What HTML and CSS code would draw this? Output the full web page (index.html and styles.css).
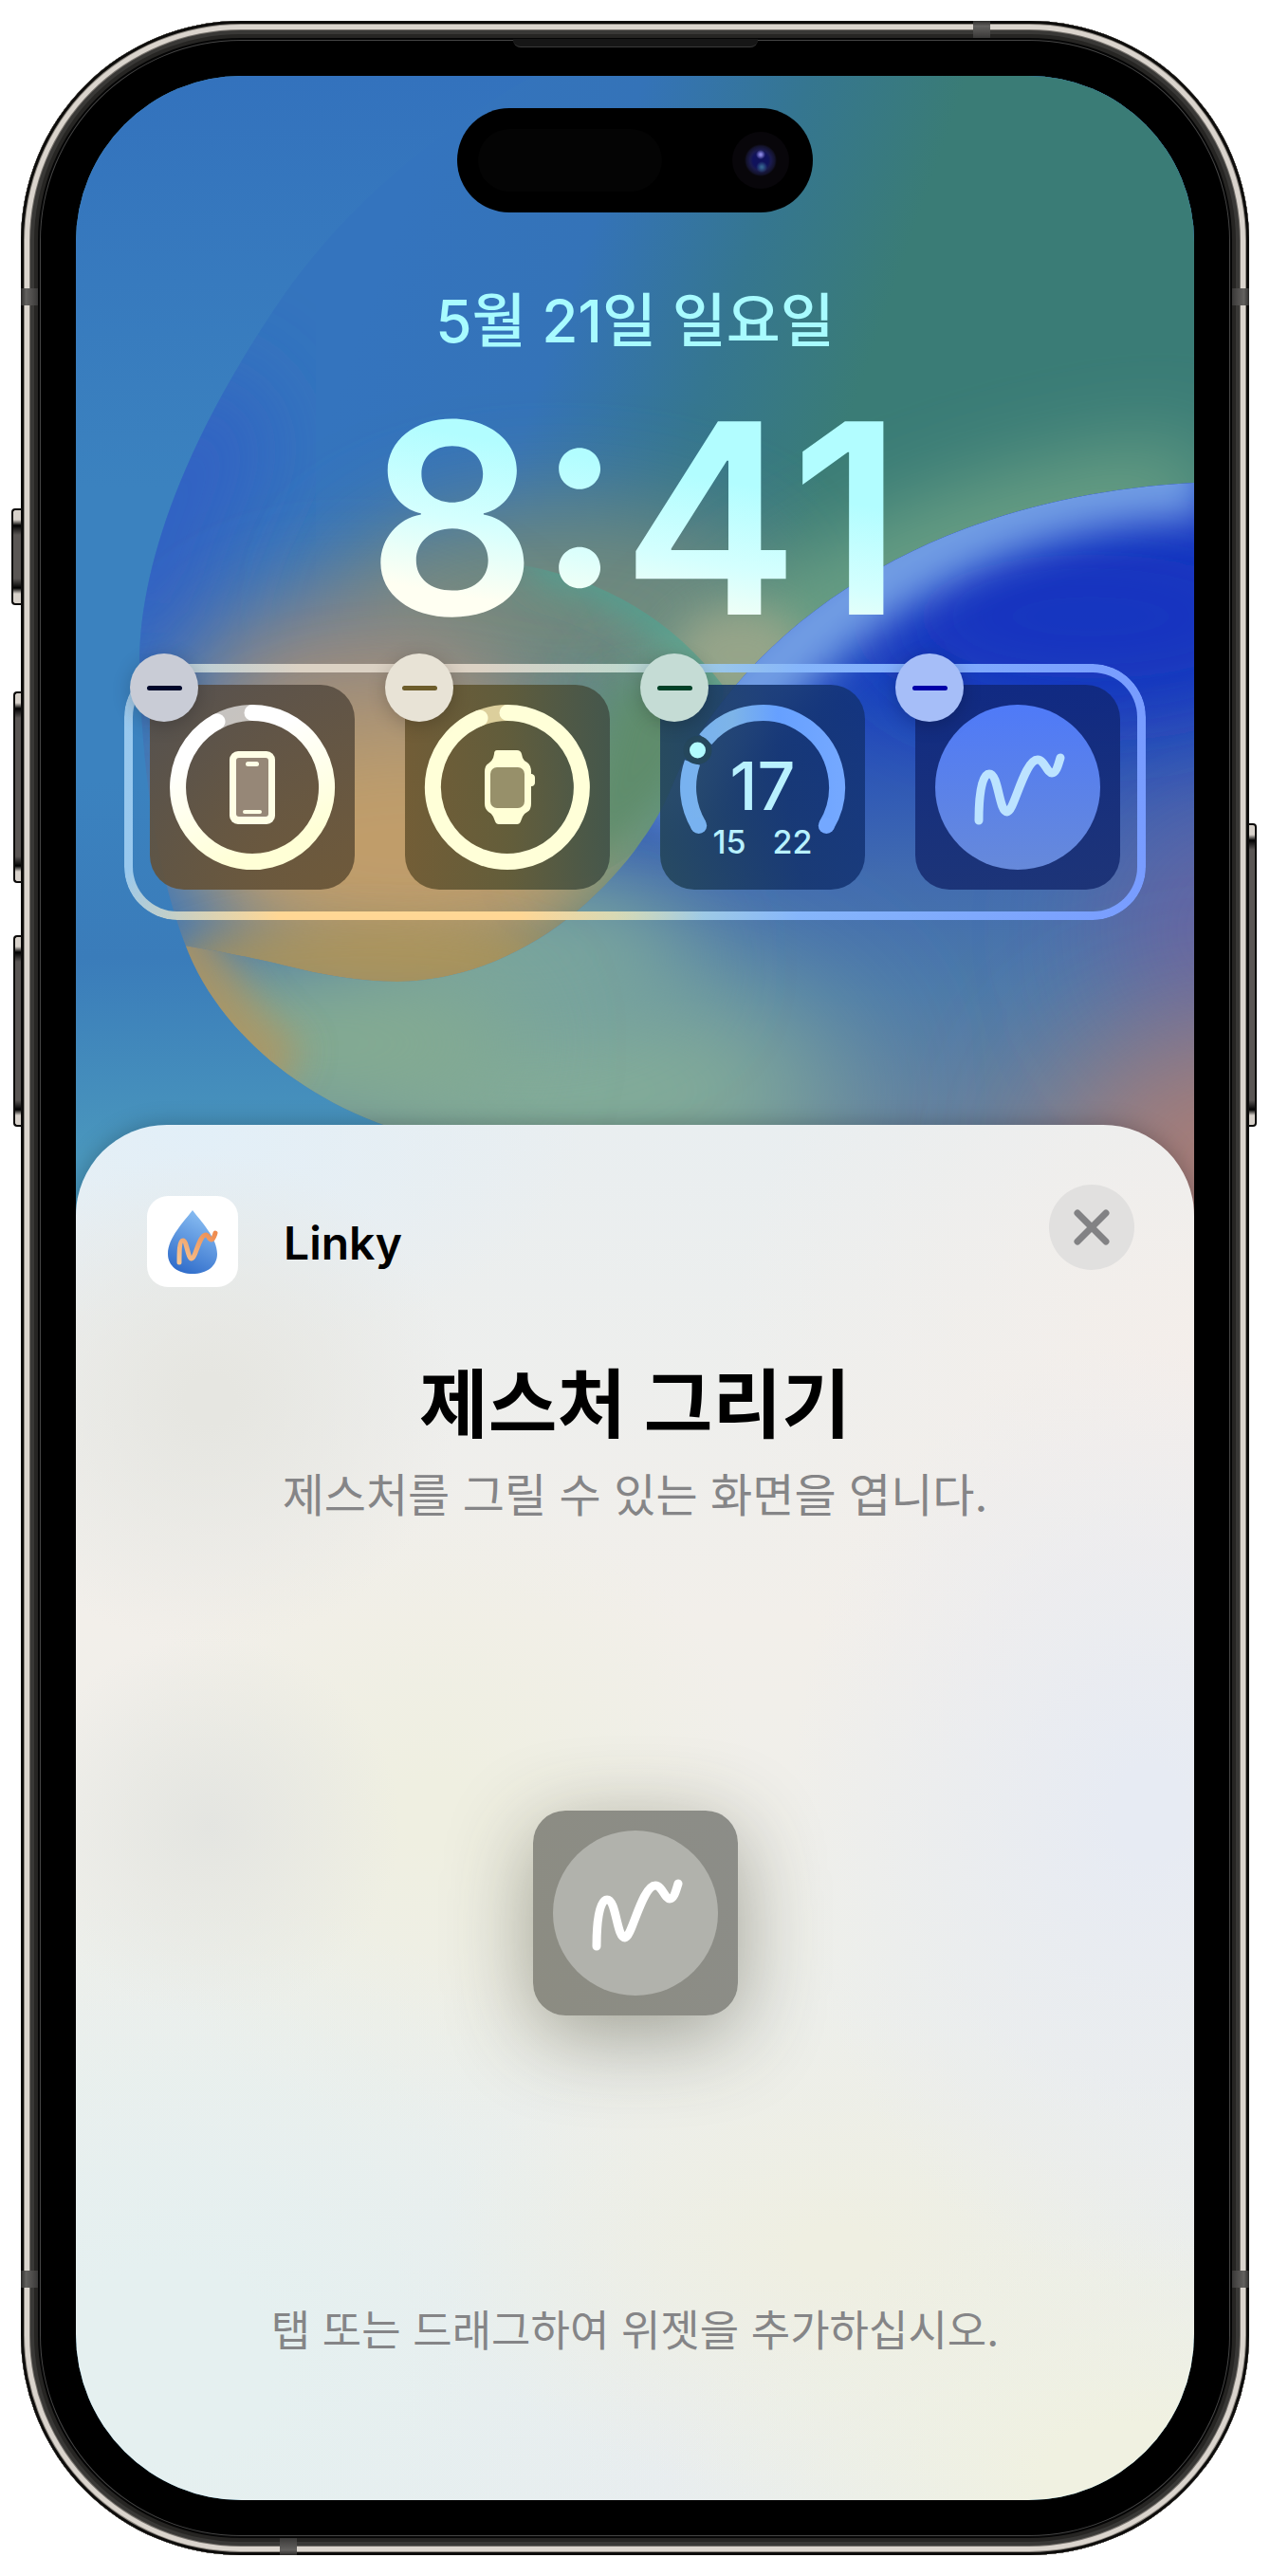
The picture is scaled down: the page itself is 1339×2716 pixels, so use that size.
FILE: index.html
```html
<!DOCTYPE html>
<html lang="ko">
<head>
<meta charset="utf-8">
<meta name="viewport" content="width=device-width, initial-scale=1">
<title>Linky</title>
<link rel="stylesheet" href="styles.css">
</head>
<body>
<div class="phone">
  <span class="key key-action"></span>
  <span class="key key-up"></span>
  <span class="key key-down"></span>
  <span class="key key-power"></span>
  <div class="frame">
    <span class="band band-left-top"></span>
    <span class="band band-right-top"></span>
    <span class="band band-left-bottom"></span>
    <span class="band band-right-bottom"></span>
    <span class="band band-top"></span>
    <span class="band band-bottom"></span>
    <span class="speaker"></span>
    <div class="screen">
      <svg class="wallpaper" viewBox="80 80 1179 1240" preserveAspectRatio="xMidYMin slice" aria-hidden="true">
        <defs>
          <linearGradient id="sky" x1="0" y1="80" x2="0" y2="1320" gradientUnits="userSpaceOnUse">
            <stop offset="0" stop-color="#3372bd"/><stop offset=".35" stop-color="#3b82bf"/><stop offset=".6" stop-color="#3b82bf"/>
            <stop offset=".75" stop-color="#3a7cba"/><stop offset=".92" stop-color="#4a97bd"/><stop offset="1" stop-color="#4a97bd"/>
          </linearGradient>
          <linearGradient id="disc" x1="430" y1="200" x2="920" y2="370" gradientUnits="userSpaceOnUse">
            <stop offset="0" stop-color="#3474be"/><stop offset=".38" stop-color="#3473b8"/><stop offset=".7" stop-color="#357690"/><stop offset="1" stop-color="#3a7c76"/>
          </linearGradient>
          <linearGradient id="orb" x1="860" y1="620" x2="880" y2="1250" gradientUnits="userSpaceOnUse">
            <stop offset="0" stop-color="#1737bf"/><stop offset=".2" stop-color="#2049bb"/><stop offset=".48" stop-color="#416bb0"/><stop offset=".68" stop-color="#4c7aaa"/><stop offset="1" stop-color="#6f849a"/>
          </linearGradient>
          <filter id="b20" x="-50%" y="-50%" width="200%" height="200%"><feGaussianBlur stdDeviation="20"/></filter>
          <filter id="b50" x="-80%" y="-80%" width="260%" height="260%"><feGaussianBlur stdDeviation="50"/></filter>
          <filter id="b80" x="-100%" y="-100%" width="300%" height="300%"><feGaussianBlur stdDeviation="75"/></filter>
          <clipPath id="discClip"><path d="M600 60C480 120 370 210 300 310C200 455 147 590 147 700C149 820 168 930 199 1005C228 1075 300 1150 410 1188L560 1330H1300V60Z"/></clipPath>
          <clipPath id="orbClip"><path d="M100 985C184 993 260 1008 300 1018C340 1028 380 1035 419 1035C520 1034 610 975 669 897C720 830 700 820 760 742C870 600 1050 520 1259 509H1300V1330H100Z"/></clipPath>
          <clipPath id="leafClip"><path d="M540 594C640 610 710 655 763 724C760 780 720 840 669 897C620 940 560 940 540 900Z"/></clipPath>
        </defs>
        <rect x="80" y="80" width="1179" height="1240" fill="url(#sky)"/>
        <g clip-path="url(#discClip)">
          <rect x="80" y="60" width="1220" height="1270" fill="url(#disc)"/>
          <path d="M250 420C190 500 147 590 147 700" fill="none" stroke="#305fc4" stroke-width="120" filter="url(#b50)"/>
          <ellipse cx="590" cy="640" rx="240" ry="110" fill="#70897e" filter="url(#b50)"/>
          <ellipse cx="370" cy="740" rx="170" ry="110" fill="#96897f" filter="url(#b50)"/>
          <ellipse cx="430" cy="890" rx="240" ry="140" fill="#c09d6a" filter="url(#b50)"/>
          <ellipse cx="390" cy="1020" rx="220" ry="50" fill="#b19555" filter="url(#b20)" opacity=".8"/>
          <path d="M640 900C720 720 900 560 1270 520" fill="none" stroke="#78aa88" stroke-width="90" filter="url(#b50)"/>
          <ellipse cx="780" cy="690" rx="70" ry="50" fill="#a8a98c" filter="url(#b20)" opacity=".7"/>
          <g clip-path="url(#leafClip)">
            <path d="M763 724C740 830 640 910 590 930L650 720Z" fill="#5f8c6c" filter="url(#b20)"/>
            <path d="M560 590C650 605 720 655 775 740" fill="none" stroke="#4ea493" stroke-width="34" filter="url(#b20)"/>
          </g>
          <g clip-path="url(#orbClip)">
            <rect x="100" y="480" width="1200" height="850" fill="url(#orb)"/>
            <ellipse cx="1150" cy="650" rx="230" ry="100" fill="#1434c0" filter="url(#b50)"/>
            <ellipse cx="1290" cy="980" rx="110" ry="130" fill="#6a62a0" filter="url(#b80)"/>
            <ellipse cx="1310" cy="1230" rx="200" ry="150" fill="#a87c76" filter="url(#b80)"/>
            <ellipse cx="620" cy="1150" rx="270" ry="130" fill="#84ae98" filter="url(#b80)"/>
            <ellipse cx="560" cy="1010" rx="170" ry="80" fill="#7aa69c" filter="url(#b50)"/>
            <ellipse cx="350" cy="1100" rx="200" ry="90" fill="#84ab92" filter="url(#b50)"/>
            <path d="M150 960C190 1040 230 1110 290 1150" fill="none" stroke="#b09560" stroke-width="110" filter="url(#b20)" opacity=".85"/>
            <path d="M690 850C870 600 1050 510 1270 504" fill="none" stroke="#719de4" stroke-width="84" filter="url(#b20)"/>
          </g>
        </g>
      </svg>

      <div class="island"><span class="sensor"></span><span class="camera"></span></div>

      <header class="clock">
        <p class="date">5월 21일 일요일</p>
        <p class="time">8:41</p>
      </header>

      <section class="widgets" aria-label="위젯">
        <div class="tile">
          <svg viewBox="0 0 216 216" aria-hidden="true">
            <defs><linearGradient id="warm" x1="0" y1="0" x2=".4" y2="1"><stop offset=".3" stop-color="#fff"/><stop offset="1" stop-color="#ffffd6"/></linearGradient></defs>
            <circle cx="108" cy="108" r="78.500" fill="none" stroke="#fff" stroke-opacity=".65" stroke-width="17" pathLength="360" stroke-dasharray="30 330" transform="rotate(-120 108 108)"/>
            <path d="M108 29.500A78.500 78.500 0 1 1 71 38.800" fill="none" stroke="url(#warm)" stroke-width="17" stroke-linecap="round"/>
            <rect x="84" y="70" width="48" height="77" rx="9" fill="#ffffe6"/>
            <rect x="91" y="77" width="34" height="62" rx="3" fill="#968777"/>
            <rect x="101" y="81" width="14" height="5" rx="2.500" fill="#ffffe6"/>
            <rect x="98" y="132" width="20" height="4" rx="2" fill="#ffffe6"/>
          </svg>
          <button class="remove remove-gray" aria-label="제거"></button>
        </div>
        <div class="tile tile-watch">
          <svg viewBox="0 0 216 216" aria-hidden="true">
            <circle cx="108" cy="108" r="78.500" fill="none" stroke="#dccf9c" stroke-width="17" pathLength="360" stroke-dasharray="24 336" transform="rotate(-114 108 108)"/>
            <path d="M108 29.500A78.500 78.500 0 1 1 79 35" fill="none" stroke="#ffffd8" stroke-width="17" stroke-linecap="round"/>
            <path d="M97 69H118Q122 69 123 73L124 77Q125 80 129 82Q133 85 133 92V94H134Q137 95 137 98V103Q137 106 134 107H133V125Q133 132 129 134Q125 136 124 139L122 144Q121 147 118 147H99Q96 147 95 144L93 139Q92 136 88 134Q84 131 84 125V92Q84 85 88 83Q92 80 93 77L94 73Q94 69 97 69Z" fill="#ffffd6"/>
            <rect x="90" y="87" width="36" height="43" rx="7" fill="#97906a"/>
          </svg>
          <button class="remove remove-sand" aria-label="제거"></button>
        </div>
        <div class="tile tile-weather">
          <svg viewBox="0 0 216 216" aria-hidden="true">
            <defs><linearGradient id="cool" x1="29" x2="187" y1="0" y2="0" gradientUnits="userSpaceOnUse"><stop offset="0" stop-color="#78b2f0"/><stop offset=".3" stop-color="#7db4e8"/><stop offset=".6" stop-color="#66a0ff"/><stop offset="1" stop-color="#74a8ff"/></linearGradient></defs>
            <path d="M40.700 148.400A78.500 78.500 0 0 1 34 82M47.800 57.600A78.500 78.500 0 0 1 175.300 148.400" fill="none" stroke="url(#cool)" stroke-width="17"/>
            <circle cx="40.700" cy="148.400" r="8.500" fill="#78b2f0"/><circle cx="175.300" cy="148.400" r="8.500" fill="#74a8ff"/>
            <circle cx="39.500" cy="69" r="15" fill="#25475c"/><circle cx="39.500" cy="69" r="8.500" fill="#b2fbff"/>
          </svg>
          <div class="gauge"><strong>17</strong><div class="range"><span>15</span><span>22</span></div></div>
          <button class="remove remove-mint" aria-label="제거"></button>
        </div>
        <div class="tile tile-link">
          <svg viewBox="0 0 216 216" aria-hidden="true">
            <defs><linearGradient id="dial" x1="0" y1="0" x2="0" y2="1"><stop offset="0" stop-color="#4f7af8"/><stop offset="1" stop-color="#6689da"/></linearGradient></defs>
            <circle cx="108" cy="108" r="87" fill="url(#dial)"/>
            <path class="stroke stroke-ice" d="M67 143C67 122 69 94 78 94C88 94 88 134 97 134C104 134 115 79 129 79C136 79 139 93 144 93C149 93 151 83 153 77"/>
          </svg>
          <button class="remove remove-blue" aria-label="제거"></button>
        </div>
      </section>

      <main class="sheet">
        <div class="sheet-head">
          <div class="app">
            <svg class="app-icon" viewBox="0 0 96 96" aria-hidden="true">
              <defs>
                <linearGradient id="drop" x1=".7" y1="0" x2=".3" y2="1"><stop offset="0" stop-color="#8dc1f4"/><stop offset="1" stop-color="#2f6cca"/></linearGradient>
                <linearGradient id="line" x1="0" y1="1" x2="1" y2="0"><stop offset="0" stop-color="#f6c592"/><stop offset="1" stop-color="#ef8c50"/></linearGradient>
              </defs>
              <rect width="96" height="96" rx="22" fill="#fff"/>
              <path d="M48 15C57 27 74 44 74 61C74 74 63 82 48 82C33 82 22 74 22 61C22 44 39 27 48 15Z" fill="url(#drop)"/>
              <path d="M34 70C34 60 34 47 38 47C42 47 43 66 47 66C51 66 55 41 62 41C65 41 65 46 68 46C70 46 71 42 72 39" fill="none" stroke="url(#line)" stroke-width="5" stroke-linecap="round" stroke-linejoin="round"/>
            </svg>
            <span class="app-name">Linky</span>
          </div>
          <button class="close" aria-label="닫기"><svg viewBox="0 0 90 90" aria-hidden="true"><path d="M30 30L60 60M60 30L30 60"/></svg></button>
        </div>
        <h1>제스처 그리기</h1>
        <p class="subtitle">제스처를 그릴 수 있는 화면을 엽니다.</p>
        <button class="preview" aria-label="제스처 그리기">
          <svg viewBox="0 0 216 216" aria-hidden="true">
            <circle cx="108" cy="108" r="87" fill="#b1b2ac"/>
            <path class="stroke" d="M67 143C67 122 69 94 78 94C88 94 88 134 97 134C104 134 115 79 129 79C136 79 139 93 144 93C149 93 151 83 153 77"/>
          </svg>
        </button>
        <p class="hint">탭 또는 드래그하여 위젯을 추가하십시오.</p>
      </main>
    </div>
  </div>
</div>
</body>
</html>
```

FILE: styles.css
```css
* { box-sizing: border-box; }
body {
  margin: 0;
  background: #fff;
  font-family: Inter, "Noto Sans CJK KR", sans-serif;
}
p, h1 { margin: 0; }
button { border: 0; padding: 0; font: inherit; cursor: pointer; }
svg { display: block; }

/* Device */
.phone { position: relative; padding: 22px; }
.frame {
  position: relative;
  padding: 58px;
  border-radius: 232px;
  background: #000;
  box-shadow:
    inset 0 0 0 3px #0d0c0b,
    inset 0 0 0 4px #8a857e,
    inset 0 0 0 9px #dad4cd,
    inset 0 0 0 10px #77736e,
    inset 0 0 0 14px #393836,
    inset 0 0 0 18px #262523,
    inset 0 0 0 20px #050505,
    inset 0 0 0 21px #454545;
}
.band { position: absolute; width: 18px; height: 18px; }
.band-left-top, .band-left-bottom { left: 0; background: linear-gradient(90deg, #2a2928, #63615f 30%, #3a3938); }
.band-right-top, .band-right-bottom { right: 0; background: linear-gradient(-90deg, #2a2928, #63615f 30%, #3a3938); }
.band-left-top, .band-right-top { top: 282px; }
.band-left-bottom, .band-right-bottom { bottom: 282px; }
.band-top { top: 0; right: 273px; background: linear-gradient(#2a2928, #63615f 30%, #3a3938); }
.band-bottom { bottom: 0; left: 273px; background: linear-gradient(#3a3938, #63615f 70%, #2a2928); }
.speaker {
  position: absolute;
  top: 19px;
  left: calc(50% - 129px);
  width: 258px;
  height: 9px;
  border-bottom: 1px solid #3a3a3a;
  border-radius: 0 0 8px 8px;
  background: #161616;
}
.key {
  position: absolute;
  left: 14px;
  width: 9px;
  border: 2px solid #0d0c0b;
  border-right: 0;
  border-radius: 4px 0 0 4px;
  background: linear-gradient(#d8d2cb 0 10px, #000 16px, #5a5654 26px, #5a5654 calc(100% - 26px), #000 calc(100% - 16px), #d8d2cb calc(100% - 10px));
}
.key-action { top: 536px; height: 102px; left: 12px; width: 11px; }
.key-up { top: 729px; height: 202px; }
.key-down { top: 986px; height: 202px; }
.key-power { top: 868px; height: 320px; left: auto; right: 14px; transform: scaleX(-1); }

.screen {
  position: relative;
  display: flex;
  flex-direction: column;
  overflow: hidden;
  border-radius: 175px;
  background: #4a97bd;
}
.wallpaper { position: absolute; top: 0; left: 0; width: 100%; height: 1240px; }

.island {
  position: relative;
  display: flex;
  align-items: center;
  justify-content: space-between;
  align-self: center;
  width: 375px;
  height: 110px;
  margin-top: 34px;
  padding: 0 25px 0 22px;
  border-radius: 55px;
  background: #000;
}
.sensor { width: 194px; height: 66px; border-radius: 33px; background: #040404; }
.camera {
  width: 60px;
  height: 60px;
  border-radius: 50%;
  background:
    radial-gradient(circle at 50% 40%, #8a86e0 0 1px, transparent 5px),
    radial-gradient(circle at 52% 62%, #35648f 0 1px, transparent 6px),
    radial-gradient(circle, #10125c 0 8px, #1b1b4e 11px, #13132c 15px, #08060a 17px);
}

/* Clock */
.clock { position: relative; text-align: center; }
.date {
  margin-top: 67px;
  color: #a8fbff;
  font-size: 62px;
  font-weight: 500;
  line-height: 95px;
}
.time {
  width: fit-content;
  margin: 8px auto 0;
  background: linear-gradient(10deg, #fffff2 22%, #d4fffe 42%, #b2fdff 64%);
  background-clip: text;
  -webkit-background-clip: text;
  color: transparent;
  font-size: 280px;
  font-weight: 600;
  line-height: 306px;
}

/* Lock-screen widgets */
.widgets {
  position: relative;
  display: flex;
  justify-content: space-between;
  margin: 0 51px;
  padding: 22px 27px 32px;
}
.widgets::before {
  content: "";
  position: absolute;
  inset: 0;
  padding: 9px;
  border-radius: 56px;
  background:
    radial-gradient(ellipse 320px 120px at 27% 100%, #ffd795 40%, transparent 100%),
    radial-gradient(ellipse 320px 130px at 26% 0, #dcd2c4 30%, transparent 100%),
    linear-gradient(90deg, #98c8ee, #b4dcd2 48%, #86b6fb 66%, #789cff);
  mask: linear-gradient(#000 0 0) content-box exclude, linear-gradient(#000 0 0);
}
.tile {
  position: relative;
  width: 216px;
  height: 216px;
  border-radius: 36px;
  background: linear-gradient(160deg, rgba(86, 78, 72, .92), rgba(104, 84, 54, .92));
}
.tile-watch { background: linear-gradient(90deg, rgba(108, 88, 50, .92), rgba(92, 88, 54, .92) 50%, rgba(66, 82, 72, .92)); }
.tile-weather { background: linear-gradient(80deg, rgba(36, 70, 90, .9), rgba(20, 52, 110, .88) 60%, rgba(18, 50, 118, .85)); }
.tile-link { background: linear-gradient(rgba(16, 40, 124, .9), rgba(24, 46, 114, .9)); }
.remove {
  position: absolute;
  top: -33px;
  left: -21px;
  display: grid;
  place-items: center;
  width: 72px;
  height: 72px;
  border-radius: 50%;
  box-shadow: 0 4px 20px rgba(0, 0, 0, .2);
}
.remove::before { content: ""; width: 37px; height: 5px; border-radius: 3px; background: currentColor; }
.remove-gray { background: #c9ccd6; color: #00072a; }
.remove-sand { background: #e8e3d6; color: #6d5d2b; }
.remove-mint { background: #c5dcd5; color: #004127; }
.remove-blue { background: #a6bef8; color: #0200a8; }
.stroke { fill: none; stroke: #fff; stroke-width: 9; stroke-linecap: round; stroke-linejoin: round; }
.stroke-ice { stroke: #bce3ff; }
.gauge {
  position: absolute;
  inset: 0;
  display: flex;
  flex-direction: column;
  align-items: center;
  padding-top: 72px;
  color: #b8f1ff;
}
.gauge strong { font-size: 70px; font-weight: 500; line-height: 70px; }
.range { display: flex; gap: 28px; font-size: 34px; font-weight: 500; line-height: 48px; }

/* Widget sheet */
.sheet {
  position: relative;
  display: flex;
  flex-direction: column;
  align-items: center;
  margin-top: 216px;
  padding: 63px 63px 142px 75px;
  border-radius: 96px 96px 0 0;
  background:
    radial-gradient(ellipse 260px 260px at 12% 20%, #e6e6e1 10%, transparent),
    radial-gradient(ellipse 420px 240px at 10% 0, #e2eff8, transparent),
    radial-gradient(ellipse 200px 200px at 12% 51%, #e4e5e1, transparent),
    radial-gradient(ellipse 380px 500px at 96% 50%, #e7ebf3 10%, transparent),
    radial-gradient(ellipse 500px 500px at 100% 18%, #f4eeea, transparent),
    radial-gradient(ellipse 500px 260px at 95% 98%, #f0f1e1 20%, transparent),
    radial-gradient(ellipse 420px 260px at 68% 82%, #efefe2 10%, transparent),
    radial-gradient(ellipse 560px 500px at 8% 90%, #e5f0f0 20%, transparent),
    radial-gradient(ellipse 340px 340px at 32% 50%, #efefe1 10%, transparent),
    linear-gradient(#e9eef0, #f2efea 36%, #eeefea 60%, #e8edef);
  box-shadow: 0 0 24px rgba(0, 0, 0, .25);
}
.sheet-head { display: flex; justify-content: space-between; align-items: flex-start; width: 100%; }
.app { display: flex; align-items: center; gap: 48px; padding-top: 12px; }
.app-icon { width: 96px; height: 96px; }
.app-name { padding-top: 3px; font-size: 48px; font-weight: 600; line-height: 60px; color: #000; }
.close { width: 90px; height: 90px; border-radius: 50%; background: #e1e0df; }
.close path { fill: none; stroke: #828284; stroke-width: 7; stroke-linecap: round; }
h1 { margin: 66px 0 0 -12px; font-size: 79px; font-weight: 700; line-height: 116px; color: #000; }
.subtitle, .hint { margin-left: -12px; color: #858587; line-height: 72px; }
.subtitle { margin-top: 2px; font-size: 48px; }
.preview {
  width: 216px;
  height: 216px;
  margin: 296px 0 0 -12px;
  border-radius: 34px;
  background: linear-gradient(70deg, #8c8c82, #8c8d88);
  box-shadow: 0 20px 90px rgba(60, 60, 40, .45);
}
.hint { margin-top: 297px; font-size: 45px; }
```
